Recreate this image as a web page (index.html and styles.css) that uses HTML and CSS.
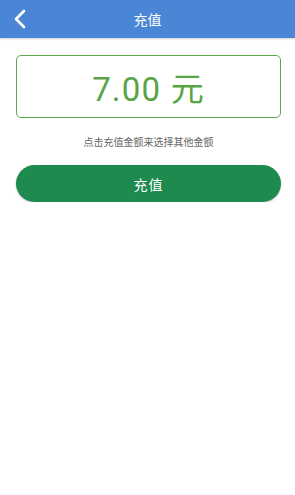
FILE: index.html
```html
<!DOCTYPE html>
<html lang="zh">
<head>
    <meta charset="UTF-8">
    <meta name="viewport" content="width=device-width, initial-scale=1.0">
    <title>充值</title>
    <link rel="stylesheet" href="styles.css">
</head>
<body>
    <div class="header">
        <a class="back" href="#">
            <svg width="16" height="20" viewBox="0 0 16 20">
                <path d="M12 2 L4 10 L12 18" fill="none" stroke="#fff" stroke-width="2.6" stroke-linecap="round" stroke-linejoin="round"/>
            </svg>
        </a>
        <h1>充值</h1>
    </div>

    <div class="content">
        <div class="amount">7.00 元</div>
        <p class="hint">点击充值金额来选择其他金额</p>
        <button class="pay-btn">充值</button>
    </div>
</body>
</html>
```

FILE: styles.css
```css
body {
    margin: 0;
    background: #fff;
    font-family: "Noto Sans", "Noto Sans CJK SC", sans-serif;
}
.header {
    position: relative;
    height: 38px;
    background: #4a86d5;
    box-shadow: 0 1px 2px rgba(0,0,0,0.2);
    display: flex;
    align-items: center;
    justify-content: center;
}
.header h1 {
    margin: 0;
    color: #fff;
    font-size: 14px;
    font-weight: normal;
}
.back {
    position: absolute;
    left: 12px;
    top: 9px;
    display: flex;
}
.content {
    padding: 17px 14px 0 16px;
}
.amount {
    height: 61px;
    border: 1.5px solid #5ba64b;
    border-radius: 5px;
    display: flex;
    align-items: center;
    justify-content: center;
    color: #58a546;
    font-size: 33px;
    letter-spacing: 1.2px;
    font-family: Roboto, "Noto Sans CJK SC", sans-serif;
}
.hint {
    margin: 16px 0 0;
    text-align: center;
    font-size: 10px;
    color: #666;
}
.pay-btn {
    display: block;
    width: 100%;
    height: 37px;
    margin-top: 16px;
    border: none;
    border-radius: 19px;
    background: #1f8a4f;
    color: #fff;
    font-size: 14px;
    letter-spacing: 1px;
    font-family: "Noto Sans CJK SC", sans-serif;
    box-shadow: 0 1px 2px rgba(0,0,0,0.25);
}
```
